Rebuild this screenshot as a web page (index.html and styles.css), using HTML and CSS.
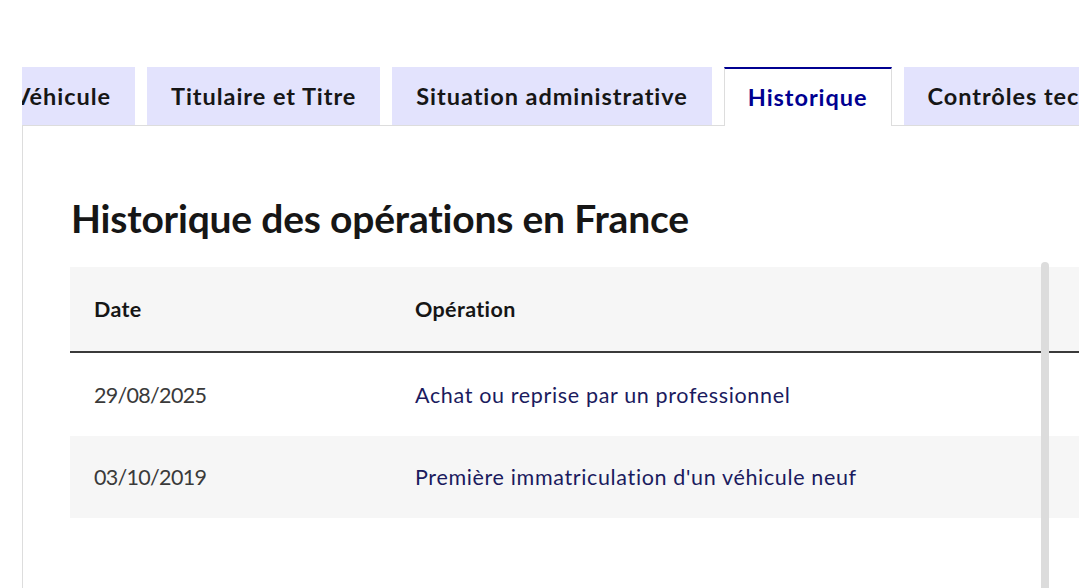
FILE: index.html
```html
<!DOCTYPE html>
<html lang="fr">
<head>
<meta charset="utf-8">
<title>Historique</title>
<link rel="stylesheet" href="styles.css">
</head>
<body>
<div class="page">
  <div class="tabs">
    <ul class="tab-list">
      <li class="tab tab-first">Véhicule</li>
      <li class="tab">Titulaire et Titre</li>
      <li class="tab">Situation administrative</li>
      <li class="tab tab-active">Historique</li>
      <li class="tab">Contrôles techniques</li>
    </ul>
    <div class="panel">
      <h2 class="title">Historique des opérations en France</h2>
      <table class="table">
        <thead>
          <tr><th class="col-date">Date</th><th>Opération</th></tr>
        </thead>
        <tbody>
          <tr><td class="date">29/08/2025</td><td class="op">Achat ou reprise par un professionnel</td></tr>
          <tr class="alt"><td class="date">03/10/2019</td><td class="op">Première immatriculation d'un véhicule neuf</td></tr>
        </tbody>
      </table>
    </div>
  </div>
  <div class="scrollbar"></div>
</div>
</body>
</html>
```

FILE: styles.css
```css
html, body {
  margin: 0;
  padding: 0;
  background: #ffffff;
  font-family: "Lato", "Noto Sans", sans-serif;
  color: #161616;
}

.page {
  position: relative;
  width: 1079px;
  height: 588px;
  overflow: hidden;
  padding-top: 67px;
  box-sizing: border-box;
}

.tabs {
  margin-left: 22px;
  overflow: hidden;
}

.tab-list {
  list-style: none;
  margin: 0;
  padding: 0;
  display: flex;
  gap: 12px;
  border-bottom: 1px solid #dddddd;
  white-space: nowrap;
}

.tab {
  flex: none;
  height: 58px;
  padding: 0 24px;
  display: flex;
  align-items: center;
  background: #e3e3fd;
  font-size: 23.5px;
  letter-spacing: 0.95px;
  font-weight: 700;
  color: #161616;
  box-sizing: border-box;
}

.tab-first {
  width: 113px;
  justify-content: flex-end;
  overflow: hidden;
}

.tab-active {
  background: #ffffff;
  color: #000091;
  border-top: 2px solid #000091;
  border-left: 1px solid #dddddd;
  border-right: 1px solid #dddddd;
  height: 59px;
  margin-bottom: -1px;
  padding: 0 23px 1px;
}

.panel {
  border-left: 1px solid #dddddd;
  padding: 68px 0 0 48px;
  height: 480px;
  box-sizing: border-box;
}

.title {
  margin: 0 0 25px 0;
  font-size: 39px;
  line-height: 48px;
  letter-spacing: -0.2px;
  font-weight: 700;
  color: #161616;
}

.table {
  border-collapse: collapse;
  width: 1040px;
  margin-left: -1px;
}

.table th {
  background: #f6f6f6;
  height: 84px;
  padding: 0 24px;
  text-align: left;
  font-size: 21.5px;
  letter-spacing: 0.35px;
  font-weight: 700;
  color: #161616;
  border-bottom: 2px solid #3a3a3a;
}

.col-date {
  width: 273px;
}

.table td {
  height: 83px;
  padding: 0 24px;
  font-size: 21.5px;
  letter-spacing: 0.65px;
  font-weight: 400;
}

.table tr.alt td {
  background: #f6f6f6;
  height: 82px;
}

.table td.date {
  color: #3a3a3a;
  letter-spacing: -0.7px;
}

.op {
  color: #1b1b5e;
}

.scrollbar {
  position: absolute;
  left: 1041px;
  top: 262px;
  width: 8px;
  height: 340px;
  border-radius: 4px;
  background: #dcdcdc;
}
```
